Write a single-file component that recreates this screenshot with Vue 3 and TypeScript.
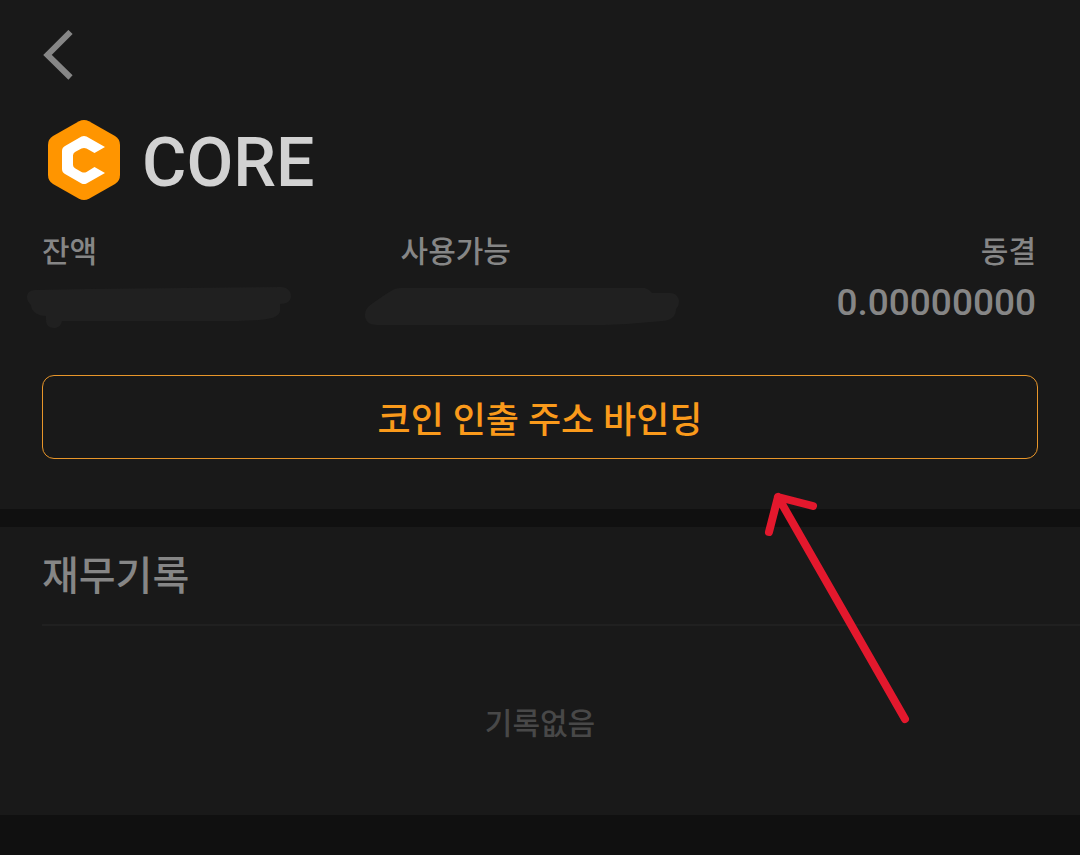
<script setup lang="ts">
interface Balance {
  id: string
  label: string
  value?: string
  mask?: { width: number; height: number; path: string }
}

const coin = 'CORE'

const balances: Balance[] = [
  {
    id: 'total',
    label: '잔액',
    mask: {
      width: 264,
      height: 44,
      path: 'M8 3 L60 2 L254 0 C260 0 264 4 264 9 C264 14 260 17 253 17 L253 24 C252 30 244 32 232 33 Q215 34 190 34 L35 34 C34 39 31 41 27 41 C22 41 19 38 19 33 L19 29 C10 29 4 24 4 18 C1 15 0 13 0 10 C0 6 3 3 8 3 Z',
    },
  },
  {
    id: 'available',
    label: '사용가능',
    mask: {
      width: 314,
      height: 44,
      path: 'M36 1 L280 1 Q284 2 287 6 L305 6 C311 6 314 10 314 15 Q314 19 311 22 C311 29 307 33 298 34 L262 37 L240 38 L12 38 C4 38 0 34 0 28 C0 23 3 19 8 16 L18 9 L26 4 Q30 1 36 1 Z',
    },
  },
  { id: 'frozen', label: '동결', value: '0.00000000' },
]
</script>

<template>
  <main class="page">
    <section class="summary">
      <button class="back" type="button" aria-label="뒤로">
        <svg width="32" height="50" viewBox="0 0 32 50" aria-hidden="true">
          <path d="M28.500 2 L5.500 25 L28.500 47.500" fill="none" stroke="#868686" stroke-width="6" />
        </svg>
      </button>

      <h1 class="coin">
        <svg class="logo" width="72" height="80" viewBox="0 0 72 80" aria-hidden="true">
          <path
            d="M31 1.300 Q36 -1.200 41 1.300 L67 16 Q72 19 72 25 V55 Q72 61 67 64 L41 78.700 Q36 81.200 31 78.700 L5 64 Q0 61 0 55 V25 Q0 19 5 16 Z"
            fill="#ff9500"
          />
          <path
            d="M33.500 16.500 Q36 15.300 38.500 16.500 L57 27 L46.500 33 L38.500 28.500 Q36 27.300 33.500 28.500 L27 32 Q25 33.300 25 35.500 V45 Q25 47 27 48.200 L33.500 52 Q36 53.200 38.500 52 L46.500 47 L57 53 L38.500 63.500 Q36 64.700 33.500 63.500 L17 54 Q14 52.300 14 49 V31 Q14 27.700 17 26 Z"
            fill="#fff"
          />
        </svg>
        <span>{{ coin }}</span>
      </h1>

      <dl class="balances">
        <div v-for="item in balances" :key="item.id" class="balance" :class="item.id">
          <dt>{{ item.label }}</dt>
          <dd>
            <svg
              v-if="item.mask"
              class="mask"
              :width="item.mask.width"
              :height="item.mask.height"
              :viewBox="`0 0 ${item.mask.width} ${item.mask.height}`"
              aria-hidden="true"
            >
              <path :d="item.mask.path" fill="#202020" />
            </svg>
            <template v-else>{{ item.value }}</template>
          </dd>
        </div>
      </dl>

      <button class="bind" type="button">코인 인출 주소 바인딩</button>

      <svg class="pointer" width="152" height="240" viewBox="0 0 152 240" aria-hidden="true">
        <path
          d="M9 42 L18 7 L53 16 M18 7 L145 229"
          fill="none"
          stroke="#e3182d"
          stroke-width="8"
          stroke-linecap="round"
          stroke-linejoin="round"
        />
      </svg>
    </section>

    <section class="records">
      <h2>재무기록</h2>
      <p>기록없음</p>
    </section>
  </main>
</template>

<style>
body {
  margin: 0;
  background: #101010;
}
</style>

<style scoped>
.page {
  min-height: 100vh;
  background: #101010;
  color: #868686;
  font-family: Roboto, "Noto Sans CJK KR", sans-serif;
  font-weight: 500;
}

button {
  padding: 0;
  background: none;
  font: inherit;
  cursor: pointer;
}

.summary {
  position: relative;
  display: flex;
  flex-direction: column;
  padding: 30px 42px 50px;
  background: #191919;
}

.back {
  align-self: flex-start;
  height: 50px;
  border: 0;
}

.back svg,
.logo {
  display: block;
}

.coin {
  display: flex;
  align-items: center;
  gap: 22px;
  height: 80px;
  margin: 40px 0 0;
  padding-left: 6px;
  color: #d2d2d2;
  font-size: 68px;
  font-weight: 500;
}

.coin span {
  padding-top: 6px;
  line-height: 80px;
}

.balances {
  display: grid;
  grid-template-columns: 36% 1fr auto;
  margin: 32px 0 0;
}

.balance {
  position: relative;
}

dt {
  font-size: 30px;
  line-height: 40px;
}

dd {
  height: 44px;
  margin: 9px 0 0;
  font-size: 37px;
  line-height: 44px;
}

.frozen {
  padding-right: 2px;
  text-align: right;
}

.mask {
  position: absolute;
  top: 55px;
}

.total .mask {
  left: -15px;
}

.available .mask {
  left: -36px;
}

.bind {
  height: 84px;
  margin-top: 50px;
  border: 1px solid #e8962a;
  border-radius: 12px;
  color: #fa9a1b;
  font-size: 36px;
}

.pointer {
  position: absolute;
  top: 490px;
  left: 760px;
  z-index: 1;
  pointer-events: none;
}

.records {
  height: 288px;
  margin-top: 18px;
  background: #191919;
}

h2 {
  margin: 0 0 0 42px;
  padding-top: 3px;
  border-bottom: 2px solid #202020;
  font-size: 40px;
  font-weight: 500;
  line-height: 94px;
}

.records p {
  margin: 78px 0 0;
  color: #484848;
  font-size: 30px;
  line-height: 40px;
  text-align: center;
}
</style>
